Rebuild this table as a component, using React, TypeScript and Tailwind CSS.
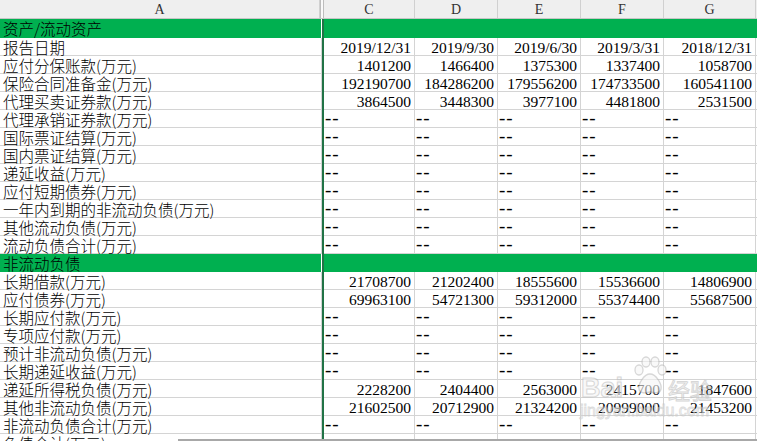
import React from "react";

type Row = { label: string; green?: boolean; vals?: string[]; first?: boolean };

const rows: Row[] = [
  { label: "资产/流动资产", green: true, first: true },
  { label: "报告日期", vals: ["2019/12/31", "2019/9/30", "2019/6/30", "2019/3/31", "2018/12/31"] },
  { label: "应付分保账款(万元)", vals: ["1401200", "1466400", "1375300", "1337400", "1058700"] },
  { label: "保险合同准备金(万元)", vals: ["192190700", "184286200", "179556200", "174733500", "160541100"] },
  { label: "代理买卖证券款(万元)", vals: ["3864500", "3448300", "3977100", "4481800", "2531500"] },
  { label: "代理承销证券款(万元)" },
  { label: "国际票证结算(万元)" },
  { label: "国内票证结算(万元)" },
  { label: "递延收益(万元)" },
  { label: "应付短期债券(万元)" },
  { label: "一年内到期的非流动负债(万元)" },
  { label: "其他流动负债(万元)" },
  { label: "流动负债合计(万元)" },
  { label: "非流动负债", green: true },
  { label: "长期借款(万元)", vals: ["21708700", "21202400", "18555600", "15536600", "14806900"] },
  { label: "应付债券(万元)", vals: ["69963100", "54721300", "59312000", "55374400", "55687500"] },
  { label: "长期应付款(万元)" },
  { label: "专项应付款(万元)" },
  { label: "预计非流动负债(万元)" },
  { label: "长期递延收益(万元)" },
  { label: "递延所得税负债(万元)", vals: ["2228200", "2404400", "2563000", "2415700", "1847600"] },
  { label: "其他非流动负债(万元)", vals: ["21602500", "20712900", "21324200", "20999000", "21453200"] },
  { label: "非流动负债合计(万元)" },
  { label: "负债合计(万元)", vals: ["315467641", "285969374", "282148211", "271927541", "255491171"] },
];

const colW = ["w-[91px]", "w-[83px]", "w-[83px]", "w-[83px]", "w-[92px]"];
const headers = ["C", "D", "E", "F", "G"];

const labelFont = "font-['Noto_Sans_CJK_SC',sans-serif] font-light";
const numFont = "font-['Liberation_Serif',serif]";

function DataRow({ row }: { row: Row }) {
  if (row.green) {
    return (
      <div className={`flex ${row.first ? "h-[19px]" : "h-[18px]"} bg-[#00b050] shrink-0`}>
        <div className={`w-[321px] pl-[3px] text-[15.5px] leading-[17px] pt-[1px] text-black ${labelFont} whitespace-nowrap`}>
          {row.label}
        </div>
        <div className="w-px bg-white" />
        <div className="w-[2px] bg-[#217346]" />
        <div className="flex-1" />
      </div>
    );
  }
  return (
    <div className="flex h-[18px] shrink-0">
      <div
        className={`w-[322px] border-b border-r border-[#d4d4d4] pl-[3px] text-[15.5px] leading-[17px] pt-[1px] text-black ${labelFont} whitespace-nowrap`}
      >
        {row.label}
      </div>
      <div className="w-[2px] bg-[#217346]" />
      {colW.map((w, i) =>
        row.vals ? (
          <div
            key={i}
            className={`${w} border-b border-r border-[#d4d4d4] text-[15.5px] leading-[17px] pt-[1px] text-black ${numFont} whitespace-nowrap text-right pr-[3px]`}
          >
            {row.vals[i]}
          </div>
        ) : (
          <div
            key={i}
            className={`${w} border-b border-r border-[#d4d4d4] text-[19px] leading-[13px] pt-[1px] text-black ${numFont} whitespace-nowrap text-left pl-[1px] tracking-[1px]`}
          >
            --
          </div>
        )
      )}
      <div className="flex-1 border-b border-[#d4d4d4]" />
    </div>
  );
}

function Watermark() {
  return (
    <div className="absolute left-[580px] top-[354px] w-[150px] h-[70px] pointer-events-none opacity-60">
      <div className="absolute left-[1px] top-[21px] text-[27px] leading-[26px] font-bold text-[#f4f4f4] font-['Liberation_Sans',sans-serif] [-webkit-text-stroke:1px_#bdbdbd]">
        Bai
      </div>
      <svg className="absolute left-[52px] top-[2px]" width="36" height="44" viewBox="0 0 36 44">
        <g fill="#f6f6f6" stroke="#bdbdbd" strokeWidth="1.3">
          <ellipse cx="7" cy="14" rx="4" ry="5" />
          <ellipse cx="14" cy="6" rx="4" ry="5" />
          <ellipse cx="23" cy="6" rx="4" ry="5" />
          <ellipse cx="30" cy="14" rx="4" ry="5" />
          <path d="M18 18 C 12 18, 6 28, 7 33 C 8 38, 14 37, 18 36 C 22 37, 28 38, 29 33 C 30 28, 24 18, 18 18 Z" />
        </g>
      </svg>
      <div className="absolute left-[88px] top-[24px] text-[22px] leading-[22px] text-[#f4f4f4] font-['Noto_Sans_CJK_SC',sans-serif] [-webkit-text-stroke:1px_#bdbdbd]">
        经验
      </div>
      <div className="absolute left-[0px] top-[49px] text-[16px] leading-[16px] text-[#f2f2f2] font-['Liberation_Sans',sans-serif] [-webkit-text-stroke:0.8px_#c4c4c4]">
        jingyan.baidu.com
      </div>
    </div>
  );
}

export default function App() {
  return (
    <div className="relative w-[757px] h-[441px] overflow-hidden bg-white flex flex-col">
      <div className={`flex h-[19px] shrink-0 bg-[#efefef] border-b border-[#c6c6c6] text-[14px] leading-[19px] text-[#333] ${numFont}`}>
        <div className="w-[320px] text-center border-r border-[#d0d0d0]">A</div>
        <div className="w-[4px] bg-[#fafafa] border-x border-[#bdbdbd]" />
        {headers.map((h, i) => (
          <div key={h} className={`${colW[i]} text-center border-r border-[#d0d0d0]`}>
            {h}
          </div>
        ))}
        <div className="flex-1" />
      </div>
      {rows.map((r, i) => (
        <DataRow key={i} row={r} />
      ))}
      <Watermark />
      <div className="absolute left-[178px] right-0 top-[439px] h-[2px] bg-[#a8a8a8]" />
    </div>
  );
}
